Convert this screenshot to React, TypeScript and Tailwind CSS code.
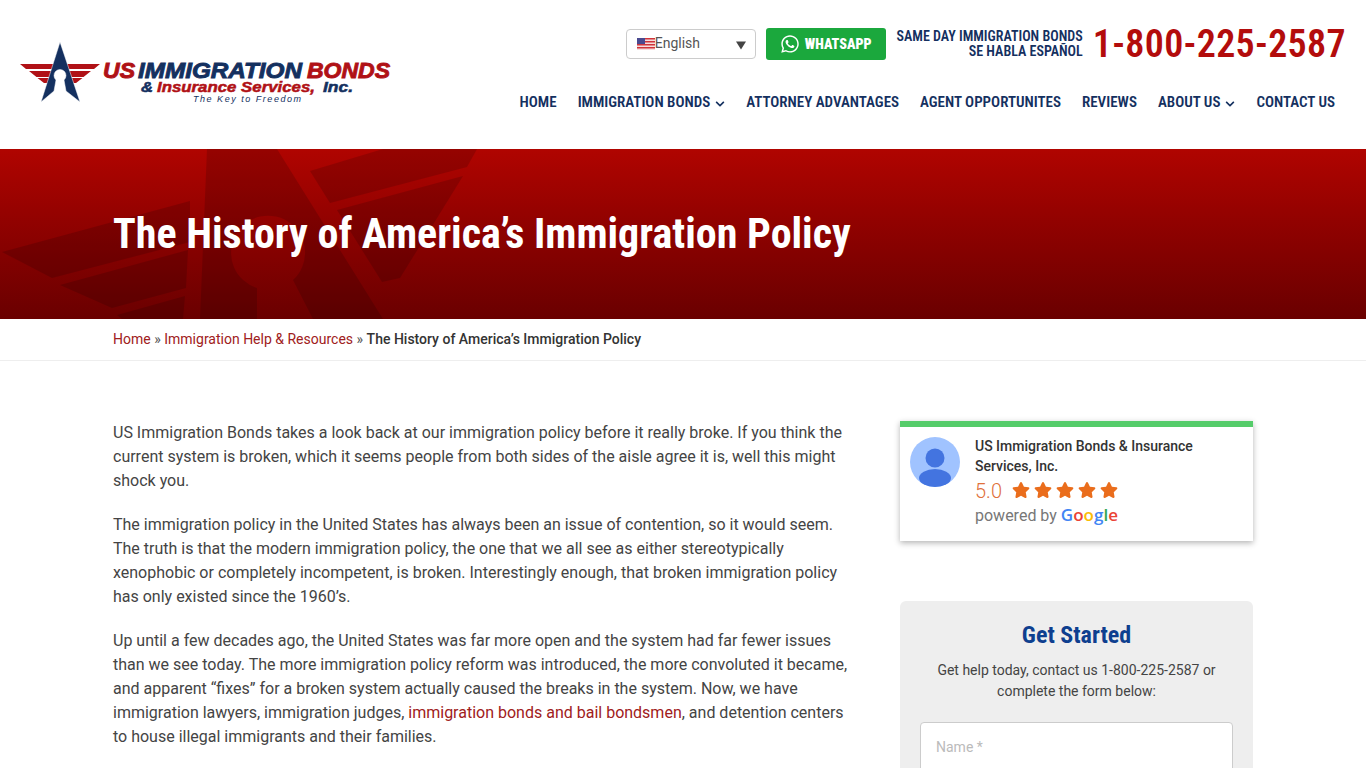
import React from 'react'
import { FaWhatsapp, FaStar, FaChevronDown } from 'react-icons/fa'

const condensed = "font-['Roboto',sans-serif] [font-stretch:75%]"

function Logo() {
  return (
    <svg width="400" height="80" viewBox="0 0 400 80" className="block">
      {/* star + wings */}
      <path d="M10 24H44V29H16ZM19 31H44V37H26.5ZM27.5 38H44V43H34Z" fill="#b01116" />
      <path d="M90 24H56V29H84ZM81 31H56V37H73.5ZM72.5 38H56V43H66Z" fill="#b01116" />
      <path d="M50 2L70 62 56 51 54 40A6 6 0 1 0 46 40L44 51 31 62Z" fill="#14305f" stroke="#fff" strokeWidth="0.5" />
      <g fontFamily="'Liberation Sans',sans-serif" fontWeight="700" fontStyle="italic">
        <text x="93" y="38" fontSize="22" fill="#b01116" stroke="#b01116" strokeWidth="0.9" textLength="32" lengthAdjust="spacingAndGlyphs">US</text>
        <text x="128" y="38" fontSize="22" fill="#14305f" stroke="#14305f" strokeWidth="0.9" textLength="164" lengthAdjust="spacingAndGlyphs">IMMIGRATION</text>
        <text x="297" y="38" fontSize="22" fill="#b01116" stroke="#b01116" strokeWidth="0.9" textLength="83" lengthAdjust="spacingAndGlyphs">BONDS</text>
        <text x="131" y="52" fontSize="14" fill="#14305f" stroke="#14305f" strokeWidth="0.5" textLength="12" lengthAdjust="spacingAndGlyphs">&amp;</text>
        <text x="147" y="52" fontSize="14" fill="#b01116" stroke="#b01116" strokeWidth="0.5" textLength="158" lengthAdjust="spacingAndGlyphs">Insurance Services,</text>
        <text x="313" y="52" fontSize="14" fill="#14305f" stroke="#14305f" strokeWidth="0.5" textLength="30" lengthAdjust="spacingAndGlyphs">Inc.</text>
        <text x="183" y="62" fontSize="9" fontWeight="400" fill="#14305f" textLength="108" lengthAdjust="spacing">The Key to Freedom</text>
      </g>
    </svg>
  )
}

function Flag() {
  return (
    <svg width="18" height="12" viewBox="0 0 18 12" className="shrink-0">
      <rect width="18" height="12" fill="#f6dcdc" />
      <path d="M0 0h18v1.5H0zM0 3h18v1.5H0zM0 6h18v1.5H0zM0 9h18v1.5H0z" fill="#d0343a" />
      <rect width="8" height="6" fill="#4a4a90" />
    </svg>
  )
}

function HeroShape() {
  return (
    <svg className="absolute inset-0 w-full h-full" viewBox="0 0 1366 170" preserveAspectRatio="none">
      <g fill="#000" fillOpacity="0.15">
        <path d="M2 103L190 52 190 93 52 129Z" />
        <path d="M60 136L188 101 186 139 112 159Z" />
        <path d="M117 166L185 147 183 170 122 170Z" />
        <path d="M207 0H277L383 170H313L293 131A37 37 0 1 0 257 139V170H200Z" />
        <path d="M310 22L383 0H477L467 18 330 54Z" />
        <path d="M337 61L463 27 400 129 382 133Z" />
      </g>
    </svg>
  )
}

const nav = [
  { label: 'HOME' },
  { label: 'IMMIGRATION BONDS', caret: true },
  { label: 'ATTORNEY ADVANTAGES' },
  { label: 'AGENT OPPORTUNITES' },
  { label: 'REVIEWS' },
  { label: 'ABOUT US', caret: true },
  { label: 'CONTACT US' },
]

export default function App() {
  return (
    <div className="h-[768px] overflow-hidden bg-white font-['Roboto',sans-serif] text-[#333]">
      <header className="h-[149px] flex justify-between pl-[10px] pr-[20px]">
        <div className="pt-[40px]"><Logo /></div>
        <div className="flex flex-col items-end">
          <div className="flex items-center h-[32px] mt-[28px] gap-[10px]">
            <div className="w-[130px] h-[30px] border border-[#ccc] rounded-[4px] flex items-center pl-[10px] pr-[8px] justify-between text-[14px] text-[#555]">
              <span className="flex items-center -mt-[1px]"><Flag /><span>English</span></span>
              <svg width="12" height="9" viewBox="0 0 12 9" className="mt-[2px]"><path d="M1 0.5H11L6 8.5Z" fill="#444" /></svg>
            </div>
            <div className="w-[120px] h-[32px] bg-[#1ba83d] rounded-[3px] flex items-center justify-center gap-[5px] text-white">
              <FaWhatsapp className="text-[20px]" />
              <span className={`${condensed} text-[14px] font-black`}>WHATSAPP</span>
            </div>
            <div className={`${condensed} w-[187px] text-[14px] leading-[15px] font-semibold text-[#14305f] text-right`}>
              SAME DAY IMMIGRATION BONDS<br />SE HABLA ESPAÑOL
            </div>
            <div className={`${condensed} text-[38px] leading-none font-semibold text-[#b30c0c] tracking-[0.35px]`}>1-800-225-2587</div>
          </div>
          <nav className={`${condensed} flex gap-[21px] mt-[33px] pr-[11px] text-[15px] font-semibold text-[#14305f]`}>
            {nav.map(n => (
              <span key={n.label} className="flex items-center gap-[5px] leading-[19px]">
                {n.label}
                {n.caret && <FaChevronDown className="text-[10px] mt-[2px]" />}
              </span>
            ))}
          </nav>
        </div>
      </header>

      <section className="relative h-[170px] bg-gradient-to-b from-[#b00400] to-[#6a0000] overflow-hidden">
        <HeroShape />
        <div className="relative pl-[113px] pt-[59px]">
          <h1 className={`${condensed} text-[42px] leading-[52px] font-bold text-white`}>The History of America’s Immigration Policy</h1>
        </div>
      </section>

      <div className="h-[42px] border-b border-[#eee] pl-[113px] flex items-center text-[14px] text-[#555]">
        <span className="text-[#a02020]">Home</span>
        <span className="mx-[3.5px]">»</span>
        <span className="text-[#a02020]">Immigration Help &amp; Resources</span>
        <span className="mx-[3.5px]">»</span>
        <span className="font-medium text-[#333]">The History of America’s Immigration Policy</span>
      </div>

      <main className="w-[1140px] ml-[113px] mt-[60px] flex justify-between">
        <article className="w-[737px] text-[16px] leading-[24px] text-[#444] space-y-[20px]">
          <p>US Immigration Bonds takes a look back at our immigration policy before it really broke. If you think the current system is broken, which it seems people from both sides of the aisle agree it is, well this might shock you.</p>
          <p>The immigration policy in the United States has always been an issue of contention, so it would seem. The truth is that the modern immigration policy, the one that we all see as either stereotypically xenophobic or completely incompetent, is broken. Interestingly enough, that broken immigration policy has only existed since the 1960’s.</p>
          <p>Up until a few decades ago, the United States was far more open and the system had far fewer issues than we see today. The more immigration policy reform was introduced, the more convoluted it became, and apparent “fixes” for a broken system actually caused the breaks in the system. Now, we have immigration lawyers, immigration judges, <span className="text-[#a02020]">immigration bonds and bail bondsmen</span>, and detention centers to house illegal immigrants and their families.</p>
        </article>

        <aside className="w-[353px]">
          <div className="h-[120px] border-t-[6px] border-[#55cc6a] bg-white shadow-[0_2px_6px_rgba(0,0,0,0.3)] flex pl-[10px] pt-[10px]">
            <svg width="50" height="50" viewBox="0 0 50 50" className="shrink-0">
              <circle cx="25" cy="25" r="25" fill="#a0c3ff" />
              <circle cx="25" cy="21" r="9.5" fill="#4374e0" />
              <ellipse cx="25" cy="41" rx="16" ry="9" fill="#4374e0" />
            </svg>
            <div className="ml-[15px]">
              <div className="-mt-[1px] text-[14px] leading-[20px] font-medium text-[#333] w-[250px]">US Immigration Bonds &amp; Insurance Services, Inc.</div>
              <div className="flex items-center mt-[2px] h-[24px]">
                <span className="text-[20px] text-[#e0703a] font-light mr-[10px] mt-[2px]">5.0</span>
                <span className="flex gap-[4px] text-[#ea6d1c] text-[18px]">
                  <FaStar /><FaStar /><FaStar /><FaStar /><FaStar />
                </span>
              </div>
              <div className="flex items-baseline text-[16px] leading-[24px] text-[#777] mt-[1px]">
                powered by
                <span className="ml-[4px] text-[17px] font-semibold font-['Open_Sans',sans-serif]">
                  <span className="text-[#4285f4]">G</span><span className="text-[#ea4335]">o</span><span className="text-[#fbbc05]">o</span><span className="text-[#4285f4]">g</span><span className="text-[#34a853]">l</span><span className="text-[#ea4335]">e</span>
                </span>
              </div>
            </div>
          </div>

          <div className="mt-[60px] bg-[#eee] rounded-[6px] px-[20px] pt-[20px] h-[300px]">
            <h2 className={`${condensed} text-center text-[24px] leading-[28px] font-bold text-[#0e3f8f]`}>Get Started</h2>
            <p className="mt-[11px] text-center text-[14px] leading-[21px] text-[#444]">Get help today, contact us 1-800-225-2587 or<br />complete the form below:</p>
            <div className="mt-[20px] h-[60px] bg-white border border-[#ccc] rounded-[4px] pl-[15px] pt-[14px] text-[14px] text-[#bbb]">Name *</div>
          </div>
        </aside>
      </main>
    </div>
  )
}
